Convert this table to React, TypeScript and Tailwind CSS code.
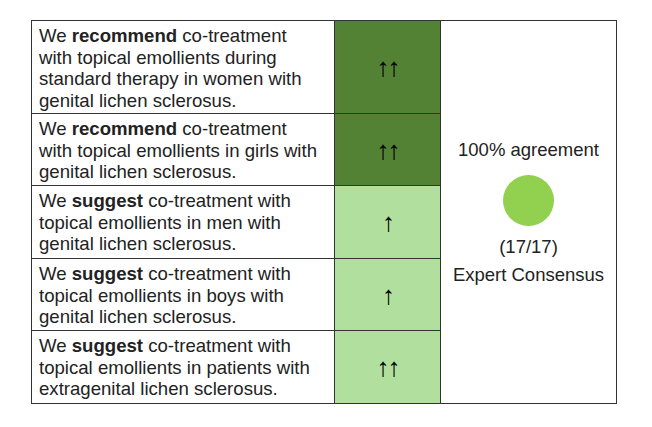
const rows = [
  { verb: 'recommend', lines: [' co-treatment', 'with topical emollients during', 'standard therapy in women with', 'genital lichen sclerosus.'], grade: '↑↑', h: 'h-[93px]' },
  { verb: 'recommend', lines: [' co-treatment', 'with topical emollients in girls with', 'genital lichen sclerosus.'], grade: '↑↑', h: 'h-[72px]' },
  { verb: 'suggest', lines: [' co-treatment with', 'topical emollients in men with', 'genital lichen sclerosus.'], grade: '↑', h: 'h-[73px]' },
  { verb: 'suggest', lines: [' co-treatment with', 'topical emollients in boys with', 'genital lichen sclerosus.'], grade: '↑', h: 'h-[72px]' },
  { verb: 'suggest', lines: [' co-treatment with', 'topical emollients in patients with', 'extragenital lichen sclerosus.'], grade: '↑↑', h: 'h-[72px]' },
]

export default function App() {
  return (
    <div className="w-[652px] h-[427px] bg-white pt-[20px] pl-[31px] font-['Liberation_Sans',Arial,sans-serif] text-[#222]">
      <div className="flex w-[586px] border border-[#333]">
        <div className="flex flex-col w-[409px]">
          {rows.map((r, i) => (
            <div key={i} className={`flex ${r.h} ${i < rows.length - 1 ? 'border-b border-[#333]' : ''}`}>
              <div className="w-[303px] border-r border-[#333] pl-[7px] pt-[4px] text-[18.6px] leading-[21.7px] whitespace-nowrap overflow-hidden">
                We <b>{r.verb}</b>
                {r.lines[0]}
                {r.lines.slice(1).map((l, j) => (
                  <div key={j}>{l}</div>
                ))}
              </div>
              <div
                className={`flex-1 flex items-center justify-center border-r border-[#333] text-[26px] leading-none tracking-[-2px] text-black ${
                  i < 2 ? 'bg-[#548235]' : 'bg-[#b1e09e]'
                }`}
              >
                {r.grade}
              </div>
            </div>
          ))}
        </div>
        <div className="flex-1 flex flex-col items-center justify-center text-[18.5px] leading-[22px]">
          <div>100% agreement</div>
          <div className="w-[51px] h-[51px] rounded-full bg-[#92d050] mt-[14px] mb-[10px]" />
          <div>(17/17)</div>
          <div className="mt-[6px]">Expert Consensus</div>
        </div>
      </div>
    </div>
  )
}
